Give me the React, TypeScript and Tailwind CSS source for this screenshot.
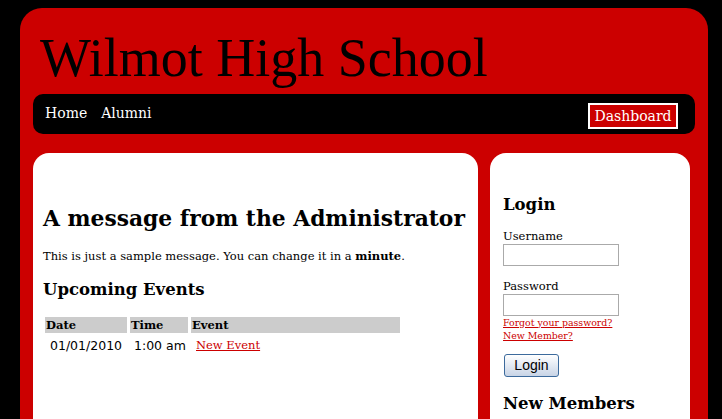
import React from "react";

const serif = { fontFamily: '"DejaVu Serif", "Liberation Serif", serif' };
const titleFont = { fontFamily: '"Liberation Serif", serif' };

export default function App() {
  return (
    <div className="w-[722px] h-[419px] overflow-hidden bg-black pt-[8px] pl-[20px]" style={serif}>
      <div className="w-[688px] h-[440px] bg-[#cc0000] rounded-[22px] px-[13px]">
        <h1 className="text-[54px] leading-none text-black pl-[7px] pt-[23px] h-[86px]" style={titleFont}>Wilmot High School</h1>
        <div className="h-[40px] bg-black rounded-[10px] flex items-center justify-between pl-[12px] pr-[17px]">
          <div className="flex gap-[14px] text-white text-[14px] -mt-[2px]">
            <span>Home</span>
            <span>Alumni</span>
          </div>
          <div className="mt-[4px] h-[26px] w-[90px] border-2 border-white bg-[#cc0000] text-white text-[14px] flex items-center justify-center">Dashboard</div>
        </div>
        <div className="flex gap-[12px] mt-[19px]">
          <div className="w-[445px] h-[300px] bg-white rounded-[16px] pl-[10px] pt-[55px]">
            <h2 className="text-[21.8px] font-bold leading-none whitespace-nowrap">A message from the Administrator</h2>
            <p className="text-[11.5px] mt-[18px]">This is just a sample message. You can change it in a <b>minute</b>.</p>
            <h3 className="text-[16.5px] font-bold mt-[17px] leading-none">Upcoming Events</h3>
            <table className="mt-[15px] -ml-[1px] text-[11.5px] border-separate border-spacing-[3px]">
              <thead>
                <tr className="text-left">
                  <th className="bg-[#cccccc] w-[82px] pl-[1px] leading-[16px] font-bold">Date</th>
                  <th className="bg-[#cccccc] w-[58px] pl-[1px] leading-[16px] font-bold">Time</th>
                  <th className="bg-[#cccccc] w-[209px] pl-[1px] leading-[16px] font-bold">Event</th>
                </tr>
              </thead>
              <tbody>
                <tr>
                  <td className="pl-[5px] pt-[1px] text-[12.5px]" style={{ fontFamily: '"DejaVu Sans", sans-serif' }}>01/01/2010</td>
                  <td className="pl-[4px] pt-[1px] text-[12.5px]" style={{ fontFamily: '"DejaVu Sans", sans-serif' }}>1:00 am</td>
                  <td className="pl-[5px] pt-[1px]"><span className="text-[#cc0000] underline">New Event</span></td>
                </tr>
              </tbody>
            </table>
          </div>
          <div className="w-[200px] h-[300px] bg-white rounded-[16px] pl-[13px] pt-[44px]">
            <h3 className="text-[16.5px] font-bold leading-none">Login</h3>
            <div className="text-[11.5px] mt-[14px] leading-[16px]">Username</div>
            <div className="w-[116px] h-[22px] border border-[#aaaaaa]"></div>
            <div className="text-[11.5px] mt-[12px] leading-[16px]">Password</div>
            <div className="w-[116px] h-[22px] border border-[#aaaaaa]"></div>
            <div className="text-[9.4px] text-[#cc0000] underline leading-[12px] mt-[1px]">Forgot your password?</div>
            <div className="text-[9.4px] text-[#cc0000] underline leading-[12px] mt-[1px]">New Member?</div>
            <div className="mt-[12px] ml-[1px] w-[55px] h-[23px] border border-[#3c6a9c] rounded-[3px] bg-gradient-to-b from-white to-[#c8d4e6] flex items-center justify-center text-[14px]" style={{ fontFamily: '"Liberation Sans", sans-serif' }}>Login</div>
            <h3 className="text-[16.5px] font-bold leading-none mt-[19px]">New Members</h3>
          </div>
        </div>
      </div>
    </div>
  );
}
